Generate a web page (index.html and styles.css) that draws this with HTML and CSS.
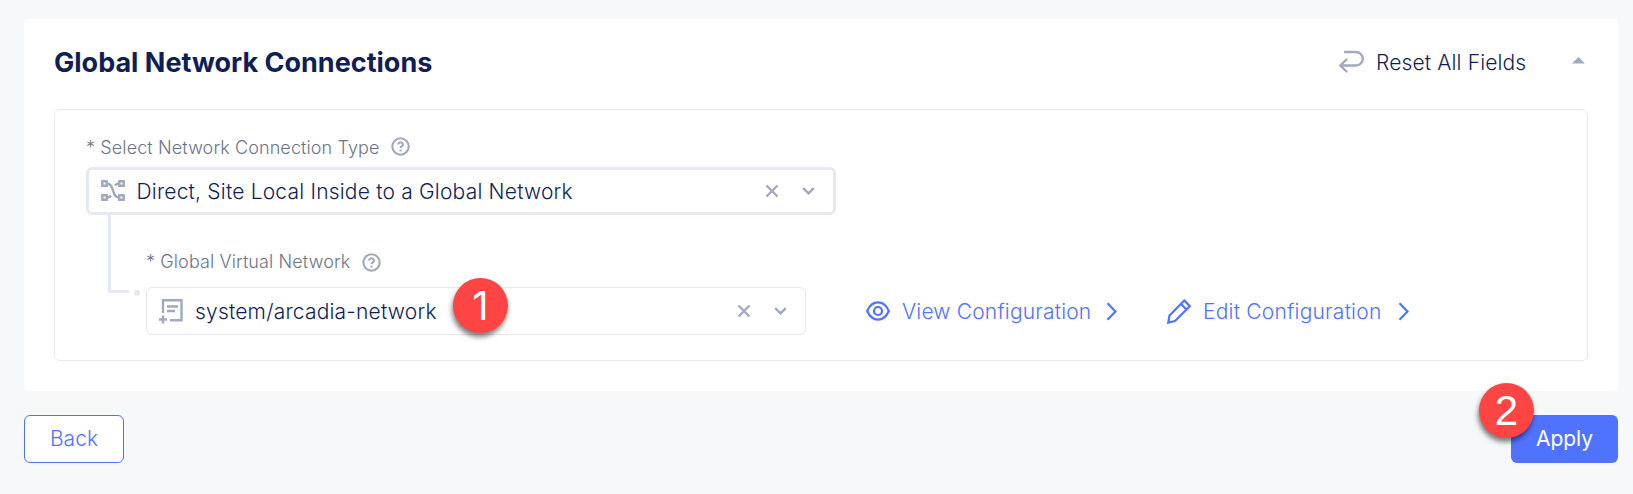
FILE: index.html
```html
<!DOCTYPE html>
<html lang="en">
<head>
<meta charset="utf-8">
<title>Global Network Connections</title>
<link rel="stylesheet" href="styles.css">
</head>
<body>
<main class="page">
  <section class="card">
    <header class="card-head">
      <h2 class="title">Global Network Connections</h2>
      <button class="reset">
        <svg class="icon-reset" width="26" height="24" viewBox="0 0 26 24"><path d="M7 2H18a6.7 6.7 0 0 1 0 13.5H2.5M8.5 9.5L2.3 15.5L8.5 21.5"/></svg>
        <span class="reset-text">Reset All Fields</span>
      </button>
      <svg class="caret" width="13" height="7" viewBox="0 0 13 7"><path d="M0 6.5L6.5 0L13 6.5Z"/></svg>
    </header>
    <div class="panel">
      <div class="label"><span class="label-type">* Select Network Connection Type</span>
        <svg class="help help-type" width="19" height="19" viewBox="0 0 19 19"><circle cx="9.5" cy="9.5" r="8.2"/><path d="M7.1 7.6a2.4 2.2 0 1 1 3.7 1.8q-1.3.8-1.3 1.7"/><path d="M9.5 12.7v1.8"/></svg>
      </div>
      <div class="select select-focus">
        <svg class="icon-net" width="24" height="21" viewBox="0 0 24 21"><path d="M1.3 1.3h4.4v4.4H1.3zM18.3 1.3h4.4v4.4h-4.4zM1.3 15.3h4.4v4.4H1.3zM18.3 15.3h4.4v4.4h-4.4zM6 3.5c8 0 4 14 12 14M18 3.5c-2 0-3 .5-4 2M6 17.5c2 0 3-.5 4-2"/></svg>
        <span class="value value-type">Direct, Site Local Inside to a Global Network</span>
        <svg class="clear" width="14" height="14" viewBox="0 0 14 14"><path d="M1.5 1.5l11 11M12.5 1.5l-11 11"/></svg>
        <svg class="down" width="13" height="8" viewBox="0 0 13 8"><path d="M1.2 1.2l5.3 5.2l5.3-5.2"/></svg>
      </div>
      <div class="nested">
        <div class="branch"><div class="elbow"></div><div class="dot"></div></div>
        <div class="field">
          <div class="label label-nested"><span class="label-net">* Global Virtual Network</span>
            <svg class="help" width="19" height="19" viewBox="0 0 19 19"><circle cx="9.5" cy="9.5" r="8.2"/><path d="M7.1 7.6a2.4 2.2 0 1 1 3.7 1.8q-1.3.8-1.3 1.7"/><path d="M9.5 12.7v1.8"/></svg>
          </div>
          <div class="row">
            <div class="select select-nested">
              <svg class="icon-list" width="24" height="25" viewBox="0 0 24 25"><path d="M4 14V1.3h18.5v20H11M8 7.5h11M8 12h8M0 20.5h8M4 16.5v8"/></svg>
              <span class="value value-net">system/arcadia-network</span>
              <svg class="clear" width="14" height="14" viewBox="0 0 14 14"><path d="M1.5 1.5l11 11M12.5 1.5l-11 11"/></svg>
              <svg class="down" width="13" height="8" viewBox="0 0 13 8"><path d="M1.2 1.2l5.3 5.2l5.3-5.2"/></svg>
              <span class="badge badge-one">1</span>
            </div>
            <a class="link link-view">
              <svg width="24" height="20" viewBox="0 0 24 20"><path d="M1.2 10C6-1.4 18-1.4 22.8 10C18 21.4 6 21.4 1.2 10Z"/><circle cx="12" cy="10" r="4"/></svg>
              <span class="link-text view-text">View Configuration</span>
              <svg width="11" height="19" viewBox="0 0 11 19"><path d="M1.5 1.3L9.5 9.5L1.5 17.7"/></svg>
            </a>
            <a class="link link-edit">
              <svg width="24" height="25" viewBox="0 0 24 25"><path d="M1.3 23.5L2.5 16.5L17.3 1.5L22.8 7.2L8 22ZM14 5L19.5 10.6"/></svg>
              <span class="link-text edit-text">Edit Configuration</span>
              <svg width="11" height="19" viewBox="0 0 11 19"><path d="M1.5 1.3L9.5 9.5L1.5 17.7"/></svg>
            </a>
          </div>
        </div>
      </div>
    </div>
  </section>
  <footer class="actions">
    <button class="btn btn-back">Back</button>
    <button class="btn btn-apply">Apply<span class="badge badge-two">2</span></button>
  </footer>
</main>
</body>
</html>
```

FILE: styles.css
```css
* { box-sizing: border-box; }
body {
  margin: 0;
  background: #f7f8fa;
  color: #0f1e57;
  font-family: Inter, "Liberation Sans", sans-serif;
  font-weight: 300;
  font-size: 21px;
}
.page { height: 494px; padding: 19px 15px 0 24px; overflow: hidden; }
svg { display: block; flex: none; fill: none; stroke: #a2a9bf; stroke-width: 2.4; }
span { white-space: nowrap; }
button { font: inherit; color: inherit; border: 0; background: none; padding: 0; }
.card { height: 372px; padding: 0 30px; background: #fff; border-radius: 5px; }
.card-head { display: flex; align-items: center; height: 90px; padding-right: 3px; }
.title { margin: 0; padding-bottom: 3px; font-size: 27px; font-weight: 700; line-height: 36px; flex: 1; }
.reset { display: flex; align-items: center; gap: 12px; height: 36px; margin-bottom: 4px; }
.reset-text { width: 151px; text-align: left; letter-spacing: .14px; }
.icon-reset { stroke-linecap: round; }
.caret { margin: 0 0 8px 45px; fill: #a2a9bf; stroke: none; }
.panel { height: 252px; padding: 27px 31px 0; border: 1px solid #e6e8f4; border-radius: 6px; }
.label { display: flex; align-items: center; gap: 11px; height: 20px; margin-bottom: 10px; font-size: 18px; letter-spacing: .11px; color: #6b7588; }
.help { stroke-width: 2.1; }
.help-type { margin-bottom: 2px; }
.select { position: relative; display: flex; align-items: center; height: 48px; border: 1px solid #e6e8f4; border-radius: 6px; background: #fff; }
.select-focus { width: 750px; border-width: 3px; padding: 0 18px 0 12px; }
.select-nested { width: 660px; padding: 0 18px 0 12px; }
.value { flex: 1; margin-left: 12px; letter-spacing: .2px; }
.value-type { margin-left: 11.5px; padding-top: 1px; }
.icon-net { margin-bottom: 1px; }
.down { margin-left: 23px; }
.nested { display: flex; }
.branch { display: flex; width: 60px; padding-left: 22px; }
.elbow { width: 21px; height: 78px; border: solid #e6e8f4; border-width: 0 0 3px 3px; }
.dot { width: 6px; height: 6px; margin: 75px 0 0 5px; border-radius: 50%; background: #e6e8f4; }
.field { padding-top: 37px; }
.label-nested { height: 20px; margin-bottom: 15px; gap: 12px; }
.label-net { padding-bottom: 2px; }
.row { display: flex; align-items: center; }
.link { display: flex; align-items: center; color: #4f73ff; }
.link svg { stroke: #4f73ff; stroke-width: 2.2; }
.link-view { margin-left: 60px; }
.link-edit { margin-left: 50px; }
.link-text { margin: 0 15px 0 12px; letter-spacing: .18px; }
.view-text { width: 189px; }
.edit-text { width: 180px; letter-spacing: .22px; }
.actions { display: flex; justify-content: space-between; padding-top: 24px; }
.btn { position: relative; height: 48px; padding-bottom: 2px; border-radius: 6px; }
.btn-back { width: 100px; border: 1px solid #4f73ff; background: #fff; color: #4f73ff; }
.btn-apply { width: 107px; background: #4f73ff; color: #fff; font-weight: 400; }
.badge {
  position: absolute;
  width: 55px;
  height: 55px;
  border-radius: 50%;
  background: #ff4444;
  color: #fff;
  font: 400 42px/55px "Liberation Sans", sans-serif;
  text-align: center;
  box-shadow: -1px 4px 5px rgba(0, 0, 0, .5);
}
.badge-one { left: 306px; top: -10px; font: 400 40px/55px Inter, sans-serif; }
.badge-two { left: -32px; top: -32px; }
```
